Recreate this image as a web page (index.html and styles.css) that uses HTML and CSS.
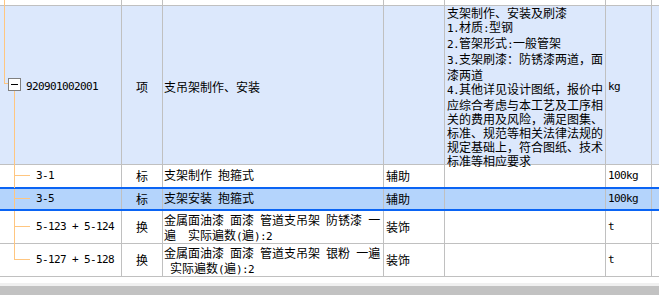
FILE: index.html
```html
<!DOCTYPE html>
<html lang="zh-CN">
<head>
<meta charset="utf-8">
<title>清单</title>
<link rel="stylesheet" href="styles.css">
</head>
<body>
<div class="sheet">
  <div class="row r0">
    <div class="cell c-code"><span class="tree-top"></span></div>
    <div class="cell"></div>
    <div class="cell"></div>
    <div class="cell"></div>
    <div class="cell"></div>
    <div class="cell"></div>
    <div class="cell last"></div>
  </div>
  <div class="row r1 blue">
    <div class="cell c-code parent">
      <span class="tree-in"></span><span class="tree-in-h"></span>
      <span class="toggle"><span class="minus"></span></span>
      <span class="tree-down"></span>
      <span class="a">920901002001</span>
    </div>
    <div class="cell c-type">项</div>
    <div class="cell c-name">支吊架制作、安装</div>
    <div class="cell"></div>
    <div class="cell c-desc"><div class="txt">支架制作、安装及刷漆<br><span class="a">1.</span>材质<span class="a">:</span>型钢<br><span class="a">2.</span>管架形式<span class="a">:</span>一般管架<br><span class="a">3.</span>支架刷漆：防锈漆两道，面<br>漆两道<br><span class="a">4.</span>其他详见设计图纸，报价中<br>应综合考虑与本工艺及工序相<br>关的费用及风险，满足图集、<br>标准、规范等相关法律法规的<br>规定基础上，符合图纸、技术<br>标准等相应要求</div></div>
    <div class="cell c-unit"><span class="a">kg</span></div>
    <div class="cell last"></div>
  </div>
  <div class="row r2 nob">
    <div class="cell c-code child"><span class="a">3-1</span></div>
    <div class="cell c-type">标</div>
    <div class="cell c-name"><div class="txt">支架制作<span class="a"> </span>抱箍式</div></div>
    <div class="cell c-cat">辅助</div>
    <div class="cell"></div>
    <div class="cell c-unit"><span class="a">100kg</span></div>
    <div class="cell last"></div>
  </div>
  <div class="row sel">
    <div class="cell c-code child"><span class="a">3-5</span></div>
    <div class="cell c-type">标</div>
    <div class="cell c-name"><div class="txt">支架安装<span class="a"> </span>抱箍式</div></div>
    <div class="cell c-cat">辅助</div>
    <div class="cell"></div>
    <div class="cell c-unit"><span class="a">100kg</span></div>
    <div class="cell last"></div>
  </div>
  <div class="row r4">
    <div class="cell c-code child"><span class="a">5-123 + 5-124</span></div>
    <div class="cell c-type">换</div>
    <div class="cell c-name two"><div class="txt">金属面油漆<span class="a"> </span>面漆<span class="a"> </span>管道支吊架<span class="a"> </span>防锈漆<span class="a"> </span>一<br>遍<span class="a">  </span>实际遍数<span class="a">(</span>遍<span class="a">):2</span></div></div>
    <div class="cell c-cat">装饰</div>
    <div class="cell"></div>
    <div class="cell c-unit"><span class="a">t</span></div>
    <div class="cell last"></div>
  </div>
  <div class="row r4">
    <div class="cell c-code child end"><span class="a">5-127 + 5-128</span></div>
    <div class="cell c-type">换</div>
    <div class="cell c-name two"><div class="txt">金属面油漆<span class="a"> </span>面漆<span class="a"> </span>管道支吊架<span class="a"> </span>银粉<span class="a"> </span>一遍<br><span class="a"> </span>实际遍数<span class="a">(</span>遍<span class="a">):2</span></div></div>
    <div class="cell c-cat">装饰</div>
    <div class="cell"></div>
    <div class="cell c-unit"><span class="a">t</span></div>
    <div class="cell last"></div>
  </div>
  <div class="footer">
    <div class="gap"></div>
    <div class="edge"></div>
    <div class="hbar"></div>
  </div>
</div>
</body>
</html>
```

FILE: styles.css
```css
* { box-sizing: border-box; }
html, body { margin: 0; padding: 0; background: #fff; }
body {
  width: 659px;
  height: 295px;
  overflow: hidden;
  font-family: "Noto Sans CJK SC", "Noto Sans", sans-serif;
  font-size: 12px;
  color: #000;
}
.sheet { display: flex; flex-direction: column; width: 659px; }
.row {
  display: grid;
  grid-template-columns: 122px 41px 221px 61px 161px 46px 1fr;
  border-bottom: 1px solid #c0c0c0;
  background: #fff;
}
.row.nob { border-bottom: none; }
.r0 { height: 6px; }
.r1 { height: 159px; }
.r2 { height: 22px; }
.sel {
  height: 24px;
  background: #b4d4fc;
  border-top: 2px solid #0a64f4;
  border-bottom: 2px solid #0a64f4;
}
.r4 { height: 33px; }
.blue { background: #dce8fc; }

.cell {
  position: relative;
  border-right: 1px solid #c0c0c0;
  display: flex;
  align-items: center;
  white-space: pre;
  line-height: 14px;
  min-width: 0;
}
.cell.last { border-right: none; }
.txt { display: block; white-space: pre; }
.a {
  font-family: "DejaVu Sans Mono", "Liberation Mono", monospace;
  font-size: 11px;
  letter-spacing: -0.62px;
}

.c-code { padding-left: 26px; }
.c-code.child { padding-left: 36px; }
.c-type { justify-content: center; }
.c-name { padding-left: 1px; }
.c-name.two { line-height: 13px; padding-top: 1px; }
.c-name.two .txt { line-height: 13px; }
.c-cat { padding-left: 2px; }
.c-desc { align-items: flex-start; padding: 0 0 0 2px; }
.c-desc .txt { line-height: 14px; }
.c-unit { padding-left: 2px; }

/* tree connectors */
.tree-top {
  position: absolute; left: 4px; top: 0; bottom: -1px; width: 1px; background: #ffc680;
}
.tree-in {
  position: absolute; left: 4px; top: 0; height: 78px; width: 1px; background: #ffc680;
}
.tree-in-h {
  position: absolute; left: 4px; top: 77px; width: 4px; height: 1px; background: #ffc680;
}
.toggle {
  position: absolute; left: 8px; top: 72px; width: 13px; height: 13px;
  border: 1px solid #808080; background: #fff;
}
.minus {
  position: absolute; left: 2px; top: 5px; width: 7px; height: 1px; background: #000;
}
.tree-down {
  position: absolute; left: 14px; top: 85px; bottom: -1px; width: 1px; background: #ffc680;
}
.child::before {
  content: ""; position: absolute; left: 14px; top: 0; bottom: -1px; width: 1px; background: #ffc680;
}
.child.end::before { bottom: auto; height: calc(50% - 1px); }
.child::after {
  content: ""; position: absolute; left: 14px; top: calc(50% - 1px); width: 16px; height: 1px; background: #ffc680;
}
.sel .child::before { bottom: 0; }

.footer { display: flex; flex-direction: column; }
.gap { height: 6px; background: #fff; }
.edge { height: 3px; background: #f0f0f0; }
.hbar { height: 9px; background: #c2c2c2; }
```
